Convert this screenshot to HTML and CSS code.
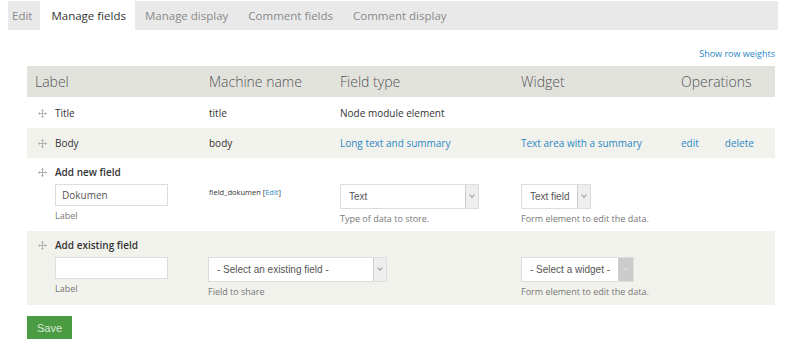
FILE: index.html
```html
<!DOCTYPE html>
<html lang="en">
<head>
    <meta charset="UTF-8">
    <title>Manage fields</title>
    <link rel="stylesheet" href="styles.css">
</head>
<body>

    <ul class="tabs">
        <li class="tab first">Edit</li>
        <li class="tab active">Manage fields</li>
        <li class="tab">Manage display</li>
        <li class="tab">Comment fields</li>
        <li class="tab">Comment display</li>
    </ul>

    <div class="content">
        <div class="weights"><a href="#">Show row weights</a></div>

        <div class="fields">
            <div class="row head">
                <div class="cell">Label</div>
                <div class="cell">Machine name</div>
                <div class="cell">Field type</div>
                <div class="cell">Widget</div>
                <div class="cell">Operations</div>
            </div>

            <div class="row">
                <div class="cell"><svg class="drag" viewBox="0 0 9 9"><path d="M4.5 0.5v8M0.5 4.5h8M3.3 1.7l1.2-1.2 1.2 1.2M3.3 7.3l1.2 1.2 1.2-1.2M1.7 3.3l-1.2 1.2 1.2 1.2M7.3 3.3l1.2 1.2-1.2 1.2"/></svg>Title</div>
                <div class="cell">title</div>
                <div class="cell">Node module element</div>
                <div class="cell"></div>
                <div class="cell"></div>
            </div>

            <div class="row even">
                <div class="cell"><svg class="drag" viewBox="0 0 9 9"><path d="M4.5 0.5v8M0.5 4.5h8M3.3 1.7l1.2-1.2 1.2 1.2M3.3 7.3l1.2 1.2 1.2-1.2M1.7 3.3l-1.2 1.2 1.2 1.2M7.3 3.3l1.2 1.2-1.2 1.2"/></svg>Body</div>
                <div class="cell">body</div>
                <div class="cell"><a href="#">Long text and summary</a></div>
                <div class="cell"><a href="#">Text area with a summary</a></div>
                <div class="cell ops"><a href="#">edit</a><a href="#">delete</a></div>
            </div>

            <div class="row add">
                <div class="add-title"><svg class="drag" viewBox="0 0 9 9"><path d="M4.5 0.5v8M0.5 4.5h8M3.3 1.7l1.2-1.2 1.2 1.2M3.3 7.3l1.2 1.2 1.2-1.2M1.7 3.3l-1.2 1.2 1.2 1.2M7.3 3.3l1.2 1.2-1.2 1.2"/></svg>Add new field</div>
                <div class="cell indent">
                    <div class="input">Dokumen</div>
                    <div class="desc">Label</div>
                </div>
                <div class="cell">
                    <div class="machine">field_dokumen [<a href="#">Edit</a>]</div>
                </div>
                <div class="cell">
                    <div class="select wide-type"><span>Text</span><i class="arrow"></i></div>
                    <div class="desc">Type of data to store.</div>
                </div>
                <div class="cell">
                    <div class="select"><span>Text field</span><i class="arrow"></i></div>
                    <div class="desc">Form element to edit the data.</div>
                </div>
                <div class="cell"></div>
            </div>

            <div class="row add even">
                <div class="add-title"><svg class="drag" viewBox="0 0 9 9"><path d="M4.5 0.5v8M0.5 4.5h8M3.3 1.7l1.2-1.2 1.2 1.2M3.3 7.3l1.2 1.2 1.2-1.2M1.7 3.3l-1.2 1.2 1.2 1.2M7.3 3.3l1.2 1.2-1.2 1.2"/></svg>Add existing field</div>
                <div class="cell indent">
                    <div class="input"></div>
                    <div class="desc">Label</div>
                </div>
                <div class="cell span2">
                    <div class="select wide-field"><span>- Select an existing field -</span><i class="arrow"></i></div>
                    <div class="desc">Field to share</div>
                </div>
                <div class="cell">
                    <div class="select"><span>- Select a widget -</span><i class="arrow off"></i></div>
                    <div class="desc">Form element to edit the data.</div>
                </div>
                <div class="cell"></div>
            </div>
        </div>

        <button class="save">Save</button>
    </div>

</body>
</html>
```

FILE: styles.css
```css
body {
    margin: 0;
    font-family: "Open Sans", Arial, sans-serif;
    font-size: 10px;
    color: #333;
    background-color: #fff;
}
a {
    color: #2c87c3;
    text-decoration: none;
}
.tabs {
    display: flex;
    list-style: none;
    margin: 1px 23px 0 8px;
    padding: 0;
    height: 29px;
    background-color: #e9e9e9;
}
.tab {
    padding: 0 10px;
    line-height: 29px;
    font-size: 11.5px;
    color: #8a8a8a;
}
.tab.first {
    padding-left: 4px;
    padding-right: 8px;
}
.tab.active {
    background-color: #fff;
    color: #333;
    padding-left: 11px;
    padding-right: 9px;
}
.content {
    margin-left: 27px;
    width: 748px;
}
.weights {
    text-align: right;
    padding-top: 18px;
    height: 18px;
    font-size: 9px;
    line-height: 12px;
}
.row {
    display: grid;
    grid-template-columns: 174px 131px 181px 160px 102px;
    align-items: center;
    height: 30px;
}
.row.even {
    background-color: #f2f2ed;
}
.row.head {
    height: 31px;
    background-color: #e2e2dd;
    font-size: 14px;
    font-weight: 300;
    color: #555;
}
.row.head + .row {
    height: 31px;
}
.cell {
    padding-left: 8px;
}
.drag {
    display: inline-block;
    width: 9px;
    height: 9px;
    margin: 0 8px 0 3px;
    vertical-align: -1px;
    fill: none;
    stroke: #aaa;
    stroke-width: 0.9;
}
.ops a {
    margin-right: 26px;
}
.row.add {
    height: auto;
    align-items: start;
    padding-bottom: 6px;
}
.row.add.even {
    padding-bottom: 7px;
}
.add-title {
    grid-column: 1 / -1;
    padding: 7px 0 5px 8px;
    font-weight: 600;
    line-height: 14px;
}
.indent {
    padding-left: 28px;
}
.span2 {
    grid-column: 2 / 4;
    padding-left: 7px;
}
.input {
    width: 105px;
    height: 20px;
    padding-left: 6px;
    border: 1px solid #ddd;
    background-color: #fff;
    line-height: 20px;
    color: #555;
}
.desc {
    margin-top: 4px;
    font-size: 9px;
    line-height: 12px;
    color: #777;
}
.machine {
    font-size: 7.5px;
    margin-top: 3px;
}
.select {
    display: inline-flex;
    height: 23px;
    border: 1px solid #ddd;
    background-color: #fff;
    font-family: "Liberation Sans", Arial, sans-serif;
    font-size: 10px;
    color: #555;
}
.select span {
    padding: 0 8px 0 8px;
    line-height: 23px;
    flex: 1;
}
.wide-type {
    width: 137px;
}
.wide-field {
    width: 177px;
}
.arrow {
    width: 12px;
    border-left: 1px solid #ccc;
    background-color: #eee;
    position: relative;
}
.arrow::after {
    content: "";
    position: absolute;
    left: 4px;
    top: 8px;
    width: 3px;
    height: 3px;
    border-right: 1px solid #999;
    border-bottom: 1px solid #999;
    transform: rotate(45deg);
}
.arrow.off {
    width: 14px;
    background-color: #ccc;
}
.arrow.off::after {
    left: 5px;
    border-color: #ddd;
}
.save {
    margin-top: 11px;
    width: 45px;
    height: 23px;
    padding: 0;
    border: none;
    background-color: #4b9b43;
    color: #d8ead6;
    font-family: "Liberation Sans", Arial, sans-serif;
    font-size: 11px;
}
```
